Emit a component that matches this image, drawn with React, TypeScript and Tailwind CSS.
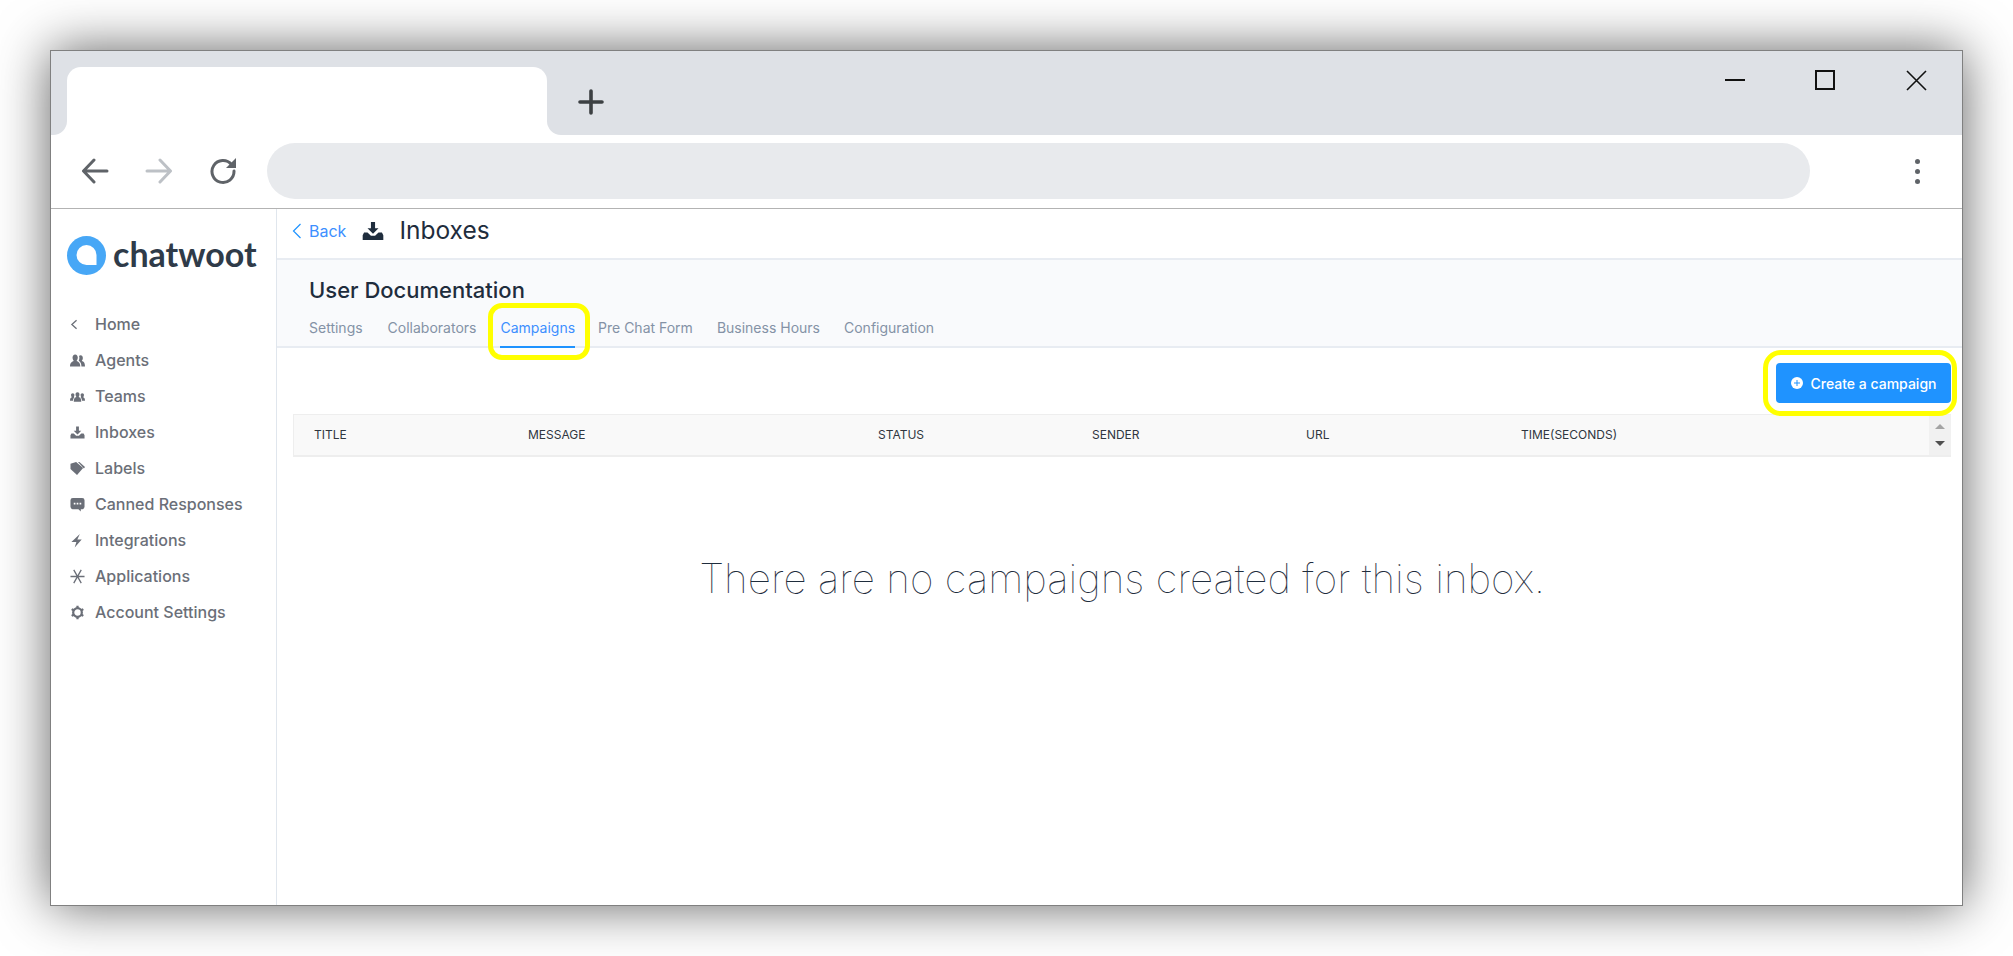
import React from "react";

const font = "font-['Inter','Liberation_Sans',sans-serif]";

const icons: Record<string, React.ReactNode> = {
  back: <path d="M7 3.5 L2 8 L7 12.5" fill="none" stroke="currentColor" strokeWidth="1.4" />,
  agents: (
    <g fill="currentColor">
      <path d="M5.5 1.5 C7.3 1.5 8.3 3 8.3 4.8 C8.3 6.4 7.6 7.6 7 8.4 C9.4 9.2 11 10.4 11 14.5 H0 C0 10.4 1.6 9.2 4 8.4 C3.4 7.6 2.7 6.4 2.7 4.8 C2.7 3 3.7 1.5 5.5 1.5 Z" />
      <path d="M11.3 2.5 C12.8 2.5 13.7 3.8 13.7 5.4 C13.7 6.8 13.1 7.8 12.6 8.5 C14.7 9.2 16 10.4 16 14.5 H12.2 C12.2 11.5 11.2 9.6 9.3 8.3 C9.8 7.2 10 6.2 10 5 C10 4.2 9.8 3.6 9.6 3.2 C10 2.8 10.6 2.5 11.3 2.5 Z" />
    </g>
  ),
  teams: (
    <g fill="currentColor">
      <path d="M8 3.5 C9.3 3.5 10.1 4.5 10.1 5.8 C10.1 7 9.6 7.9 9.2 8.5 C11 9 12 10 12 13.5 H4 C4 10 5 9 6.8 8.5 C6.4 7.9 5.9 7 5.9 5.8 C5.9 4.5 6.7 3.5 8 3.5 Z" />
      <path d="M2.9 4.6 C4 4.6 4.7 5.4 4.7 6.5 C4.7 7.5 4.3 8.1 4 8.7 L4.8 9 C3.8 9.8 3.2 10.9 3.2 12.5 H0 C0 10 0.7 9.2 1.9 8.7 C1.5 8.1 1.1 7.5 1.1 6.5 C1.1 5.4 1.8 4.6 2.9 4.6 Z" />
      <path d="M13.1 4.6 C12 4.6 11.3 5.4 11.3 6.5 C11.3 7.5 11.7 8.1 12 8.7 L11.2 9 C12.2 9.8 12.8 10.9 12.8 12.5 H16 C16 10 15.3 9.2 14.1 8.7 C14.5 8.1 14.9 7.5 14.9 6.5 C14.9 5.4 14.2 4.6 13.1 4.6 Z" />
    </g>
  ),
  inbox: (
    <g fill="currentColor">
      <path d="M6.5 1.5 H9.5 V6 H12 L8 10 L4 6 H6.5 Z" />
      <path d="M1.5 9 H4 L6.5 11.5 H9.5 L12 9 H14.5 L15.5 11 V14.5 H0.5 V11 Z" />
    </g>
  ),
  labels: (
    <g fill="currentColor">
      <path d="M0.5 3 L6.5 1 L14 7.5 L7.5 15 L0.5 8.5 Z" />
      <path d="M8.5 1 H10 L16 6.5 L14.8 8 Z" />
    </g>
  ),
  canned: (
    <path
      fill="currentColor"
      fillRule="evenodd"
      d="M3 1 H13 A2.5 2.5 0 0 1 15.5 3.5 V10.5 A2.5 2.5 0 0 1 13 13 H11.5 V15.5 L9 13 H3 A2.5 2.5 0 0 1 0.5 10.5 V3.5 A2.5 2.5 0 0 1 3 1 Z M4 6.2 V8 H5.8 V6.2 Z M7.1 6.2 V8 H8.9 V6.2 Z M10.2 6.2 V8 H12 V6.2 Z"
    />
  ),
  flash: <path fill="currentColor" d="M10.5 1 L7.8 7 H12.5 L5 15.5 L6.8 9.5 H1.5 Z" />,
  apps: (
    <path
      d="M0.5 8 H15.5 M4 1 L12 15 M12 1 L4 15"
      fill="none"
      stroke="currentColor"
      strokeWidth="1.4"
    />
  ),
  gear: (
    <g>
      <circle cx="8" cy="8" r="4.6" fill="none" stroke="currentColor" strokeWidth="2.4" />
      <path
        d="M8 0.8 V3.2 M8 12.8 V15.2 M1.8 4.4 L3.9 5.6 M12.1 10.4 L14.2 11.6 M1.8 11.6 L3.9 10.4 M12.1 5.6 L14.2 4.4"
        stroke="currentColor"
        strokeWidth="2.4"
      />
    </g>
  ),
};

function Icon({ name, size = 16, className = "" }: { name: string; size?: number; className?: string }) {
  return (
    <svg width={size} height={size} viewBox="0 0 16 16" className={className}>
      {icons[name]}
    </svg>
  );
}

const nav = [
  ["back", "Home"],
  ["agents", "Agents"],
  ["teams", "Teams"],
  ["inbox", "Inboxes"],
  ["labels", "Labels"],
  ["canned", "Canned Responses"],
  ["flash", "Integrations"],
  ["apps", "Applications"],
  ["gear", "Account Settings"],
];

const cols: [string, string][] = [
  ["TITLE", "w-[214px]"],
  ["MESSAGE", "w-[350px]"],
  ["STATUS", "w-[214px]"],
  ["SENDER", "w-[214px]"],
  ["URL", "w-[215px]"],
  ["TIME(SECONDS)", "w-[214px]"],
];

function Sidebar() {
  return (
    <aside className="w-[226px] shrink-0 border-r border-[#e0e6ed] pl-4">
      <div className="flex items-center h-[39px] mt-[27px] gap-[7px]">
        <svg width="39" height="39" viewBox="0 0 39 39" className="shrink-0">
          <circle cx="19.5" cy="19.5" r="19.5" fill="#47a7f6" />
          <path d="M19.5 9 A10 10 0 1 0 19.5 29 H29.5 V19 A10 10 0 0 0 19.5 9 Z" fill="#fff" />
        </svg>
        <span className="font-['Lato',sans-serif] font-bold text-[34px] leading-none pb-[4px] text-[#2f3b49]">chatwoot</span>
      </div>
      <ul className="mt-[31px] flex flex-col">
        {nav.map(([icon, label]) => (
          <li key={label} className="flex items-center h-9 text-[#6b6f78]">
            <span className="w-[28px] pl-[3px] flex items-center">
              <Icon name={icon} size={15} />
            </span>
            <span className={`${font} text-[16px] font-medium leading-none`}>{label}</span>
          </li>
        ))}
      </ul>
    </aside>
  );
}

function Main() {
  return (
    <main className={`flex-1 min-w-0 flex flex-col ${font}`}>
      <header className="h-[51px] shrink-0 border-b-2 border-[#e8ecf2] flex items-center pl-[14px] pb-[6px]">
        <svg width="12" height="18" viewBox="0 0 12 18" className="text-[#1f93ff]">
          <path d="M9.5 2 L2.5 9 L9.5 16" fill="none" stroke="currentColor" strokeWidth="1.2" />
        </svg>
        <span className="ml-[6px] text-[#3d8fff] text-base">Back</span>
        <Icon name="inbox" size={22} className="ml-4 text-[#1f2d3d]" />
        <h1 className="ml-[15px] text-[24.5px] text-[#1f2d3d] leading-none">Inboxes</h1>
      </header>
      <div className="h-[88px] shrink-0 bg-[#f9fafc] border-b-2 border-[#e8ecf2] pl-[32px] flex flex-col">
        <h2 className="mt-[16px] text-[22px] leading-[28px] font-medium text-[#1f2d3d]">User Documentation</h2>
        <div className="mt-auto h-[34px] flex items-start gap-6 text-sm text-[#8492a6]">
          <span className="h-8 flex items-center">Settings</span>
          <span className="h-8 flex items-center ml-px">Collaborators</span>
          <span className="relative h-9 pb-[2px] flex items-center text-[#3d8fff] border-b-2 border-[#1f93ff]">
            Campaigns
            <span className="absolute left-[-12px] right-[-15px] top-[-9px] bottom-[-14px] border-[5px] border-[#ffff00] rounded-[14px]" />
          </span>
          <span className="h-8 flex items-center -ml-px">Pre Chat Form</span>
          <span className="h-8 flex items-center">Business Hours</span>
          <span className="h-8 flex items-center">Configuration</span>
        </div>
      </div>
      <div className="flex-1 pl-[16px] pr-[11px] flex flex-col">
        <div className="flex justify-end mt-[15px]">
          <div className="relative">
            <button className="w-[175px] h-10 rounded bg-[#1f93ff] text-white text-[14px] font-medium flex items-center justify-center gap-2">
              <svg width="12" height="12" viewBox="0 0 12 12">
                <circle cx="6" cy="6" r="6" fill="#fff" />
                <path d="M3 6 H9 M6 3 V9" stroke="#1f93ff" strokeWidth="1" />
              </svg>
              Create a campaign
            </button>
            <span className="absolute left-[-13px] right-[-6px] top-[-13px] bottom-[-13px] border-[5px] border-[#ffff00] rounded-[18px]" />
          </div>
        </div>
        <div className="mt-[11px] h-[43px] shrink-0 flex bg-[#f9f9f9] border-t border-l border-[#eeeeee] border-b-2">
          <div className="flex-1 flex items-center text-xs text-[#2f3640] pl-5">
            {cols.map(([c, w]) => (
              <span key={c} className={w}>
                {c}
              </span>
            ))}
          </div>
          <div className="w-[22px] bg-[#f1f1f1] flex flex-col items-center justify-center gap-[12px]">
            <span className="w-0 h-0 border-x-[5px] border-x-transparent border-b-[5px] border-b-[#a3a3a3]" />
            <span className="w-0 h-0 border-x-[5px] border-x-transparent border-t-[5px] border-t-[#505050]" />
          </div>
        </div>
        <p className="mt-[98px] text-center text-[40.5px] font-thin leading-[48px] text-[#1f2d3d]">
          There are no campaigns created for this inbox.
        </p>
      </div>
    </main>
  );
}

function Browser() {
  return (
    <div className="w-[1913px] h-[856px] border border-[#808080] bg-white flex flex-col shadow-[0_0_50px_rgba(0,0,0,0.62)]">
      <div className="h-[84px] shrink-0 bg-[#dee1e6] flex pt-4 relative">
        <div className="ml-4 w-[480px] bg-white rounded-t-[14px] relative">
          <span className="absolute left-[-16px] bottom-0 w-4 h-4 bg-white">
            <span className="block w-4 h-4 bg-[#dee1e6] rounded-br-[14px]" />
          </span>
          <span className="absolute right-[-16px] bottom-0 w-4 h-4 bg-white">
            <span className="block w-4 h-4 bg-[#dee1e6] rounded-bl-[14px]" />
          </span>
        </div>
        <svg width="26" height="26" viewBox="0 0 26 26" className="ml-[31px] mt-[22px] text-[#3c4043]">
          <path d="M13 2 V24 M2 13 H24" stroke="currentColor" strokeWidth="3.6" strokeLinecap="round" />
        </svg>
        <div className="ml-auto mr-[35px] mt-[3px] flex items-start gap-[70px]">
          <svg width="20" height="20" viewBox="0 0 20 20"><path d="M0 10 H20" stroke="#111" strokeWidth="2" /></svg>
          <svg width="20" height="20" viewBox="0 0 20 20" className="mr-px"><rect x="1" y="1" width="18" height="18" fill="none" stroke="#111" strokeWidth="2" /></svg>
          <svg width="21" height="21" viewBox="0 0 21 21"><path d="M1 1 L20 20 M20 1 L1 20" stroke="#111" strokeWidth="1.6" /></svg>
        </div>
      </div>
      <div className="h-[74px] shrink-0 border-b border-[#b3b3b3] flex items-center pb-px">
        <svg width="28" height="26" viewBox="0 0 28 26" className="ml-[30px] text-[#5f6368]">
          <path d="M26 13 H3 M13 2 L2.5 13 L13 24" fill="none" stroke="currentColor" strokeWidth="3" strokeLinecap="round" strokeLinejoin="round" />
        </svg>
        <svg width="28" height="26" viewBox="0 0 28 26" className="ml-[36px] text-[#bdc1c6]">
          <path d="M2 13 H25 M15 2 L25.5 13 L15 24" fill="none" stroke="currentColor" strokeWidth="3" strokeLinecap="round" strokeLinejoin="round" />
        </svg>
        <svg width="28" height="28" viewBox="0 0 28 28" className="ml-[36px] text-[#5f6368]">
          <path d="M22.5 7.5 A11 11 0 1 0 25 14" fill="none" stroke="currentColor" strokeWidth="3" strokeLinecap="round" />
          <path d="M27 1 V11 H17 Z" fill="currentColor" />
        </svg>
        <div className="ml-[30px] w-[1543px] h-14 rounded-full bg-[#e8eaed]" />
        <div className="ml-[105px] flex flex-col gap-[5px]">
          <span className="w-[5px] h-[5px] rounded-full bg-[#5f6368]" />
          <span className="w-[5px] h-[5px] rounded-full bg-[#5f6368]" />
          <span className="w-[5px] h-[5px] rounded-full bg-[#5f6368]" />
        </div>
      </div>
      <div className="flex-1 min-h-0 flex">
        <Sidebar />
        <Main />
      </div>
    </div>
  );
}

export default function App() {
  return (
    <div className="w-[2013px] h-[956px] overflow-hidden bg-white pl-[50px] pt-[50px]">
      <Browser />
    </div>
  );
}
